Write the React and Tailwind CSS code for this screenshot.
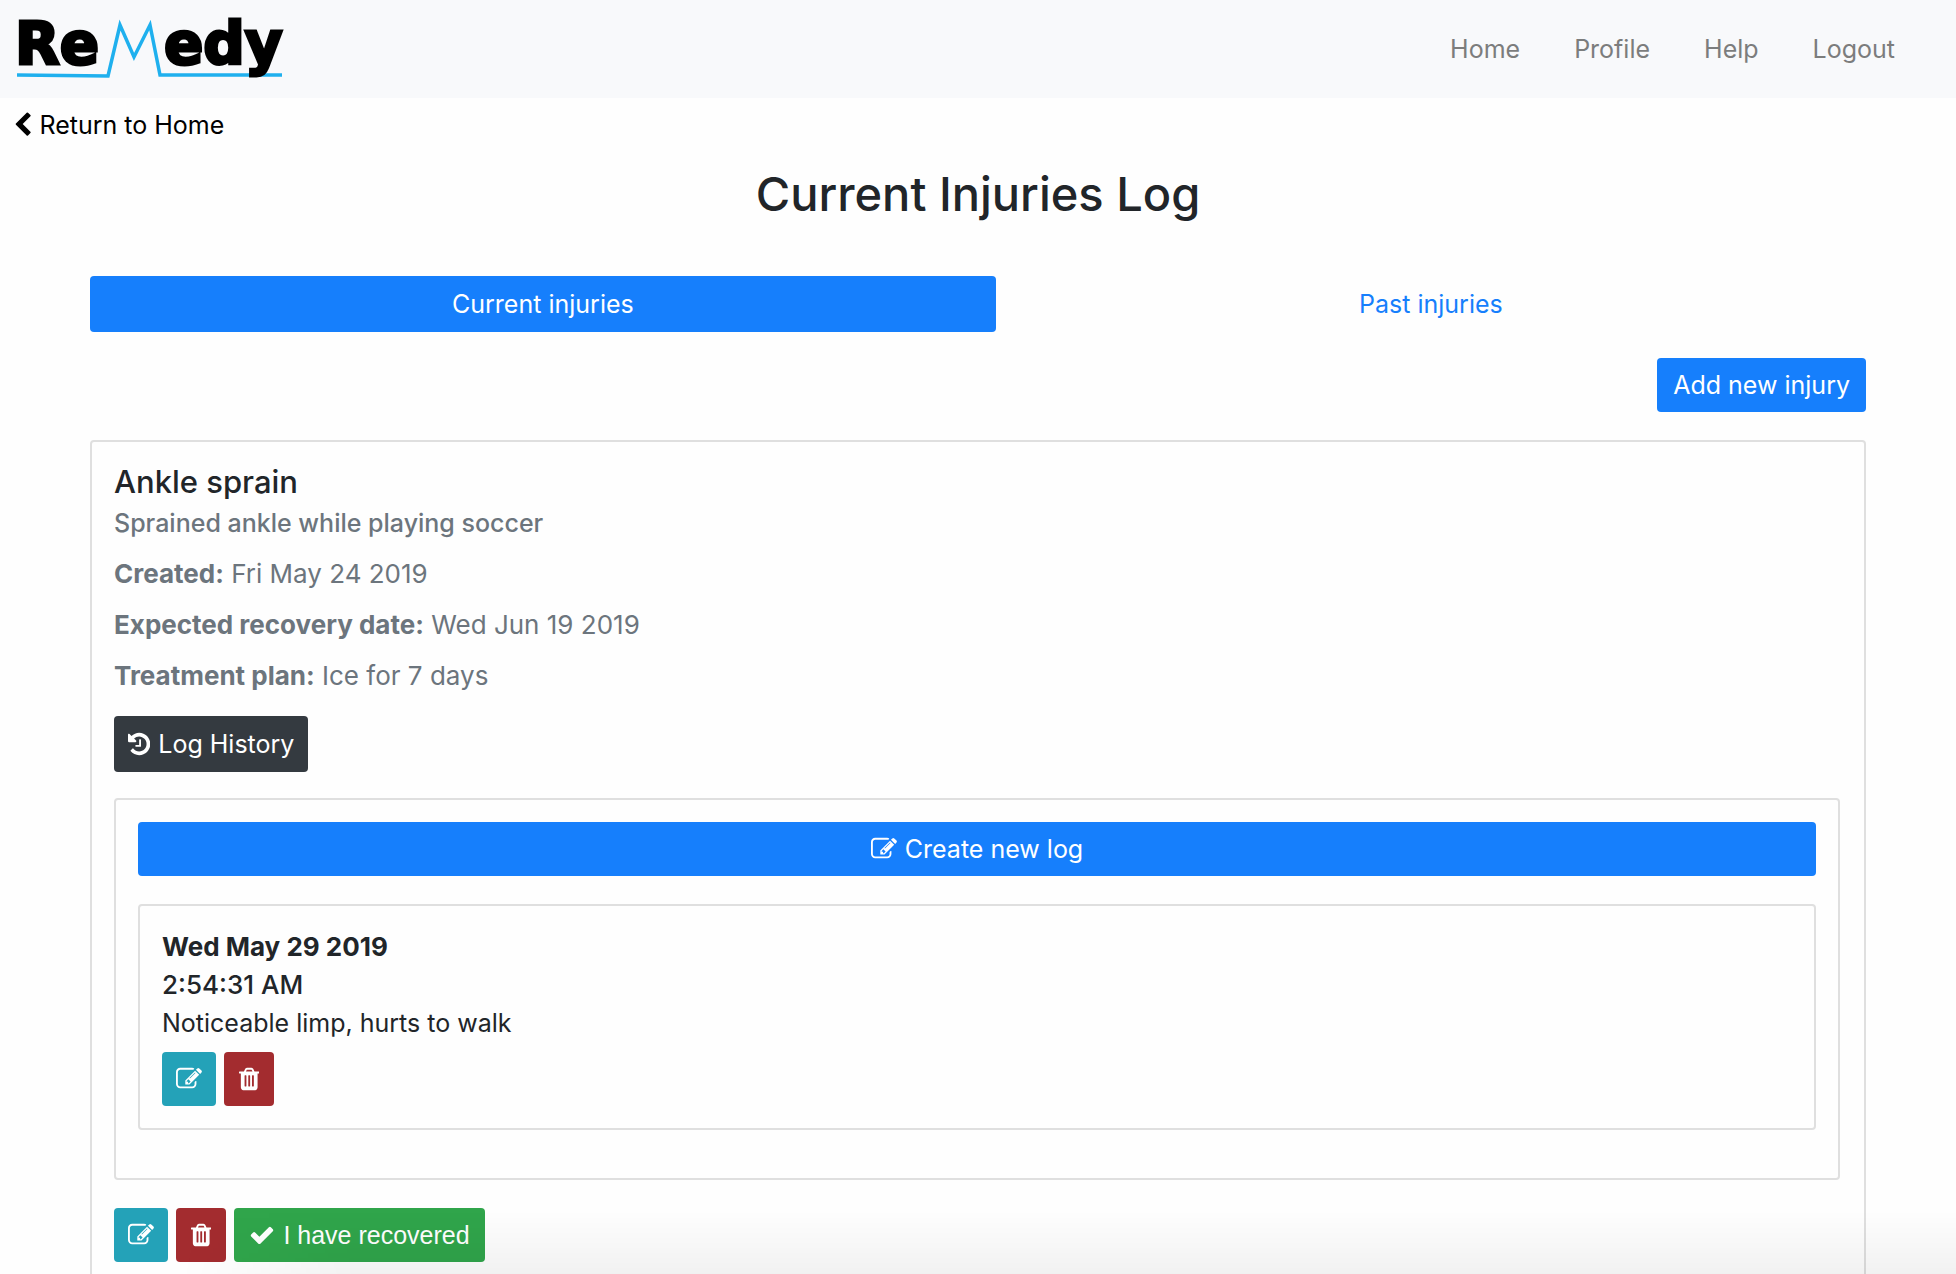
const ICONS = {
  edit: {
    box: "0 0 1792 1792",
    d: "M888 1184l116-116-152-152-116 116v56h96v96h56zm440-720q-16-16-33 1l-350 350q-17 17-1 33t33-1l350-350q17-17 1-33zm80 594v190q0 119-84.5 203.5t-203.5 84.5h-832q-119 0-203.5-84.5t-84.5-203.5v-832q0-119 84.5-203.5t203.5-84.5h832q63 0 117 25 15 7 18 23 3 17-9 29l-49 49q-14 14-32 8-23-6-45-6h-832q-66 0-113 47t-47 113v832q0 66 47 113t113 47h832q66 0 113-47t47-113v-126q0-13 9-22l64-64q15-15 35-7t20 29zm-96-738l288 288-672 672h-288v-288zm444 132l-92 92-288-288 92-92q28-28 68-28t68 28l152 152q28 28 28 68t-28 68z",
  },
  trash: {
    box: "192 0 1408 1792",
    d: "M704 1376v-704q0-14-9-23t-23-9h-64q-14 0-23 9t-9 23v704q0 14 9 23t23 9h64q14 0 23-9t9-23zm256 0v-704q0-14-9-23t-23-9h-64q-14 0-23 9t-9 23v704q0 14 9 23t23 9h64q14 0 23-9t9-23zm256 0v-704q0-14-9-23t-23-9h-64q-14 0-23 9t-9 23v704q0 14 9 23t23 9h64q14 0 23-9t9-23zm-544-992h448l-48-117q-7-9-17-11h-317q-10 2-17 11zm928 32v64q0 14-9 23t-23 9h-96v948q0 83-47 143.5t-113 60.5h-832q-66 0-113-58.5t-47-141.5v-952h-96q-14 0-23-9t-9-23v-64q0-14 9-23t23-9h309l70-167q15-37 54-63t79-26h320q40 0 79 26t54 63l70 167h309q14 0 23 9t9 23z",
  },
  history: {
    box: "128 0 1536 1792",
    d: "M1664 896q0 156-61 298t-164 245-245 164-298 61q-172 0-327-72.5t-264-204.5q-7-10-6.5-22.5t8.5-20.5l137-138q10-9 25-9 16 2 23 12 73 95 179 147t225 52q104 0 198.5-40.5t163.5-109.5 109.5-163.5 40.5-198.5-40.5-198.5-109.5-163.5-163.5-109.5-198.5-40.5q-98 0-188 35.5t-160 101.5l137 138q31 30 14 69-17 40-59 40h-448q-26 0-45-19t-19-45v-448q0-42 40-59 39-17 69 14l130 129q107-101 244.5-156.5t284.5-55.5q156 0 298 61t245 164 164 245 61 298zm-640-288v448q0 14-9 23t-23 9h-320q-14 0-23-9t-9-23v-64q0-14 9-23t23-9h224v-352q0-14 9-23t23-9h64q14 0 23 9t9 23z",
  },
  check: {
    box: "0 0 1792 1792",
    d: "M1671 566q0 40-28 68l-724 724-136 136q-28 28-68 28t-68-28l-136-136-362-362q-28-28-28-68t28-68l136-136q28-28 68-28t68 28l294 295 656-657q28-28 68-28t68 28l136 136q28 28 28 68z",
  },
  back: {
    box: "296 0 1200 1792",
    d: "M1427 301l-531 531 531 531q19 19 19 45t-19 45l-166 166q-19 19-45 19t-45-19l-742-742q-19-19-19-45t19-45l742-742q19-19 45-19t45 19l166 166q19 19 19 45t-19 45z",
  },
};

function Icon({ name }) {
  return (
    <svg viewBox={ICONS[name].box} className="h-[26px] w-auto shrink-0" fill="currentColor" aria-hidden="true">
      <path d={ICONS[name].d} />
    </svg>
  );
}

function Logo() {
  return (
    <svg viewBox="0 0 300 98" className="h-[98px] w-[300px]" role="img" aria-label="Remedy">
      <path d="M17 75 L108 76 L120 25 L134 57 L150 25 L160 75 H282" fill="none" stroke="#1fb0ee" strokeWidth="3.5" />
      <g
        fontFamily="DejaVu Sans, sans-serif"
        fontWeight="700"
        fontSize="58"
        stroke="#000"
        strokeWidth="3"
      >
        <text x="15" y="64">Re</text>
        <text x="164" y="64">edy</text>
      </g>
    </svg>
  );
}

function EditDelete() {
  return (
    <>
      <button aria-label="Edit" className="flex h-[54px] items-center rounded-[4px] bg-[#24a2b8] px-[14px] text-white">
        <Icon name="edit" />
      </button>
      <button aria-label="Delete" className="flex h-[54px] items-center rounded-[4px] bg-[#a32c2f] px-[15px] text-white">
        <Icon name="trash" />
      </button>
    </>
  );
}

const DETAILS = [
  ["Created:", "Fri May 24 2019"],
  ["Expected recovery date:", "Wed Jun 19 2019"],
  ["Treatment plan:", "Ice for 7 days"],
];

export default function App() {
  return (
    <div className="relative h-screen overflow-hidden bg-[#fefefe] font-['Inter',sans-serif] text-[25px] leading-[38px] text-[#212529]">
      <header className="flex h-[98px] items-center justify-between bg-[#f8f9fb] pr-[61px]">
        <a href="#home"><Logo /></a>
        <nav className="flex gap-[54px] text-[#7c7d7d]">
          <a href="#home">Home</a>
          <a href="#profile">Profile</a>
          <a href="#help">Help</a>
          <a href="#logout">Logout</a>
        </nav>
      </header>
      <a href="#home" className="mt-2 ml-[14px] inline-flex items-center gap-2 text-black">
        <Icon name="back" />
        Return to Home
      </a>
      <main className="px-[90px]">
        <h1 className="mt-4 text-center text-[47px] leading-[60px] font-medium">Current Injuries Log</h1>
        <div role="tablist" className="mt-[52px] grid grid-cols-[51fr_49fr] text-center">
          <button role="tab" aria-selected="true" className="h-14 rounded-[4px] bg-[#167ffc] text-white">Current injuries</button>
          <button role="tab" aria-selected="false" className="h-14 text-[#167ffc]">Past injuries</button>
        </div>
        <div className="mt-[26px] flex justify-end">
          <button className="h-[54px] rounded-[4px] bg-[#167ffc] px-4 text-white">Add new injury</button>
        </div>
        <section className="mt-7 rounded-[4px] border-2 border-[#dfdfdf] pt-[22px] pr-6 pb-6 pl-[22px]">
          <h2 className="text-[31px] leading-9 font-medium">Ankle sprain</h2>
          <div className="mt-1 flex flex-col gap-[13px] text-[#6c757d]">
            <p className="font-medium">Sprained ankle while playing soccer</p>
            {DETAILS.map(([label, value]) => (
              <p key={label} className="text-[26px]"><strong className="font-bold">{label}</strong> {value}</p>
            ))}
          </div>
          <button className="mt-[21px] flex h-14 items-center gap-2 rounded-[4px] bg-[#343a40] px-[14px] text-white">
            <Icon name="history" />
            Log History
          </button>
          <div className="mt-[26px] rounded-[4px] border-2 border-[#dfdfdf] px-[22px] pt-[22px] pb-12">
            <button className="flex h-[54px] w-full items-center justify-center gap-2 rounded-[4px] bg-[#167ffc] text-white">
              <Icon name="edit" />
              Create new log
            </button>
            <article className="mt-7 rounded-[4px] border-2 border-[#dfdfdf] p-[22px]">
              <p className="text-[26px] font-bold">Wed May 29 2019</p>
              <p className="text-[26px] font-medium">2:54:31 AM</p>
              <p>Noticeable limp, hurts to walk</p>
              <div className="mt-[10px] flex gap-2">
                <EditDelete />
              </div>
            </article>
          </div>
          <div className="mt-7 flex gap-2">
            <EditDelete />
            <button className="flex h-[54px] items-center gap-2 rounded-[4px] bg-[#30a54b] px-[15px] font-['Liberation_Sans',sans-serif] text-white">
              <Icon name="check" />
              I have recovered
            </button>
          </div>
        </section>
      </main>
      <div className="pointer-events-none absolute right-0 bottom-0 left-[180px] h-16 bg-linear-to-b from-transparent to-black/5 mask-l-from-90% mask-l-to-100%" />
    </div>
  );
}
